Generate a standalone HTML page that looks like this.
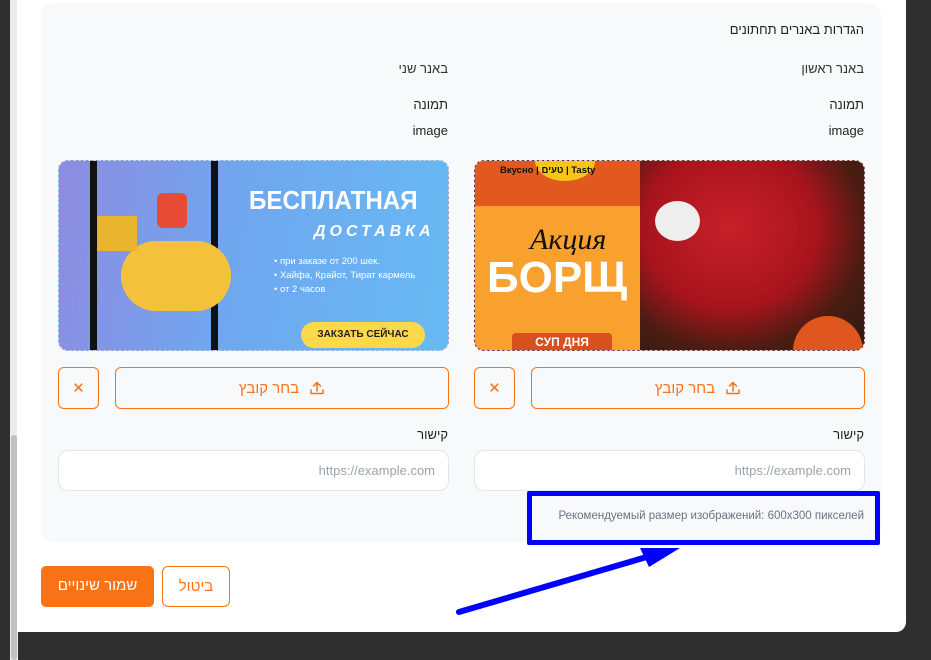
<!DOCTYPE html>
<html><head><meta charset="utf-8"><style>
*{box-sizing:border-box;margin:0;padding:0}
body{width:931px;height:660px;background:#2f2f2f;position:relative;overflow:hidden;font-family:"Liberation Sans","DejaVu Sans",sans-serif;}
.a{position:absolute}
.t{position:absolute;font-size:13px;color:#222;white-space:nowrap;direction:rtl}
.btn{position:absolute;border:1px solid #f97316;border-radius:6px;color:#f97316;background:#f8f9fb;display:flex;align-items:center;justify-content:center;font-size:15px}
.inp{position:absolute;background:#fff;border:1px solid #e3e5e8;border-radius:10px;color:#9ca3af;font-size:13px;text-align:right;padding:12px 13px 0 0}
</style></head><body>
<div class="a" style="left:10px;top:0;width:8px;height:660px;background:#ececec"></div>
<div class="a" style="left:11px;top:435px;width:6px;height:225px;background:#c1c1c1;border-radius:3px"></div>
<div class="a" style="left:17px;top:0;width:889px;height:632px;background:#fff;border-radius:0 0 10px 0"></div>
<div class="a" style="left:41px;top:3px;width:840px;height:539px;background:#f8f9fb;border-radius:12px"></div>
<div class="t" style="right:67px;top:22px">הגדרות באנרים תחתונים</div>
<div class="t" style="right:67px;top:61px;color:#333">באנר ראשון</div>
<div class="t" style="right:483px;top:61px;color:#333">באנר שני</div>
<div class="t" style="right:67px;top:97px">תמונה</div>
<div class="t" style="right:483px;top:97px">תמונה</div>
<div class="t" style="right:67px;top:123px">image</div>
<div class="t" style="right:483px;top:123px">image</div>

<!-- banner 1 -->
<div class="a" style="left:474px;top:160px;width:391px;height:191px;border:1px dashed #cfd3d8;border-radius:10px;overflow:hidden;background:#7a1e1a">
 <div class="a" style="left:0;top:0;width:165px;height:191px;background:#f9a12e"></div>
 <div class="a" style="left:0;top:0;width:165px;height:45px;background:#e1591f"></div>
 <div class="a" style="left:165px;top:0;width:226px;height:191px;background:radial-gradient(ellipse at 40% 35%,#c8202a 0%,#a8141c 45%,#4a1c12 70%,#2a1a14 100%)"></div>
 <div class="a" style="left:318px;top:155px;width:70px;height:70px;border-radius:50%;background:#e0561f"></div>
 <div class="a" style="left:180px;top:40px;width:45px;height:40px;border-radius:50%;background:#eee"></div>
 <div class="a" style="left:60px;top:-20px;width:60px;height:40px;border-radius:50%;background:#f5c518"></div>
 <div class="a" style="left:25px;top:4px;font-size:9.5px;font-weight:bold;color:#111">Вкусно | טעים | Tasty</div>
 <div class="a" style="left:55px;top:62px;font-size:30px;font-style:italic;font-family:'Liberation Serif',serif;color:#111">Акция</div>
 <div class="a" style="left:12px;top:92px;font-size:44px;font-weight:bold;color:#fff;letter-spacing:0px">БОРЩ</div>
 <div class="a" style="left:37px;top:172px;width:100px;height:22px;background:#d8501e;border-radius:4px;color:#fff;font-size:12px;font-weight:bold;text-align:center;padding-top:2px">СУП ДНЯ</div>
</div>
<!-- banner 2 -->
<div class="a" style="left:58px;top:160px;width:391px;height:191px;border:1px dashed #cfd3d8;border-radius:10px;overflow:hidden;background:linear-gradient(100deg,#8e8be0 0%,#6fa7ef 45%,#67baf3 100%)">
 <div class="a" style="left:31px;top:0;width:7px;height:191px;background:#111"></div>
 <div class="a" style="left:152px;top:0;width:7px;height:191px;background:#111"></div>
 <div class="a" style="left:62px;top:80px;width:110px;height:70px;border-radius:40px;background:#f4c23a"></div>
 <div class="a" style="left:38px;top:55px;width:40px;height:35px;background:#e9b42e"></div>
 <div class="a" style="left:98px;top:32px;width:30px;height:35px;background:#e84b35;border-radius:6px"></div>
 <div class="a" style="left:190px;top:24px;font-size:26px;font-weight:bold;color:#fff;transform:scaleX(0.93);transform-origin:left">БЕСПЛАТНАЯ</div>
 <div class="a" style="left:255px;top:62px;font-size:16px;font-style:italic;font-weight:bold;color:#fff;letter-spacing:4px">ДОСТАВКА</div>
 <div class="a" style="left:215px;top:94px;font-size:9.5px;color:#fff;line-height:14px">• при заказе от 200 шек.<br>• Хайфа, Крайот, Тират кармель<br>• от 2 часов</div>
 <div class="a" style="left:242px;top:161px;width:124px;height:26px;background:#fcd94a;border-radius:13px;font-size:10px;font-weight:bold;color:#222;text-align:center;padding-top:7px">ЗАКЗАТЬ СЕЙЧАС</div>
</div>

<div class="btn" style="left:474px;top:367px;width:41px;height:42px;font-size:15px">✕</div>
<div class="btn" style="left:531px;top:367px;width:334px;height:42px;direction:rtl"><svg width="16" height="16" viewBox="0 0 16 16" style="margin-left:10px"><path d="M2 10v3.5h12V10M8 11V2.5M4.5 6L8 2.5 11.5 6" fill="none" stroke="#f97316" stroke-width="1.5" stroke-linecap="round" stroke-linejoin="round"/></svg>בחר קובץ</div>
<div class="btn" style="left:58px;top:367px;width:41px;height:42px;font-size:15px">✕</div>
<div class="btn" style="left:115px;top:367px;width:334px;height:42px;direction:rtl"><svg width="16" height="16" viewBox="0 0 16 16" style="margin-left:10px"><path d="M2 10v3.5h12V10M8 11V2.5M4.5 6L8 2.5 11.5 6" fill="none" stroke="#f97316" stroke-width="1.5" stroke-linecap="round" stroke-linejoin="round"/></svg>בחר קובץ</div>

<div class="t" style="right:67px;top:427px">קישור</div>
<div class="t" style="right:483px;top:427px">קישור</div>
<div class="inp" style="left:474px;top:450px;width:391px;height:41px">https://example.com</div>
<div class="inp" style="left:58px;top:450px;width:391px;height:41px">https://example.com</div>

<div class="a" style="right:67px;top:510px;font-size:11.5px;color:#6b7280;white-space:nowrap">Рекомендуемый размер изображений: 600x300 пикселей</div>
<div class="a" style="left:527px;top:491px;width:353px;height:54px;border:5px solid #0000ff;border-radius:2px"></div>
<svg class="a" style="left:0;top:0" width="931" height="660"><path d="M459 612L650 556" stroke="#0000ff" stroke-width="6" stroke-linecap="round"/><path d="M640 548L680 548L649 567Z" fill="#0000ff"/></svg>

<div class="a" style="left:41px;top:566px;width:113px;height:41px;background:#f97316;border-radius:5px;color:#fff;font-size:15px;text-align:center;padding-top:11px;direction:rtl">שמור שינויים</div>
<div class="btn" style="left:162px;top:566px;width:68px;height:41px;background:#fff">ביטול</div>
</body></html>
